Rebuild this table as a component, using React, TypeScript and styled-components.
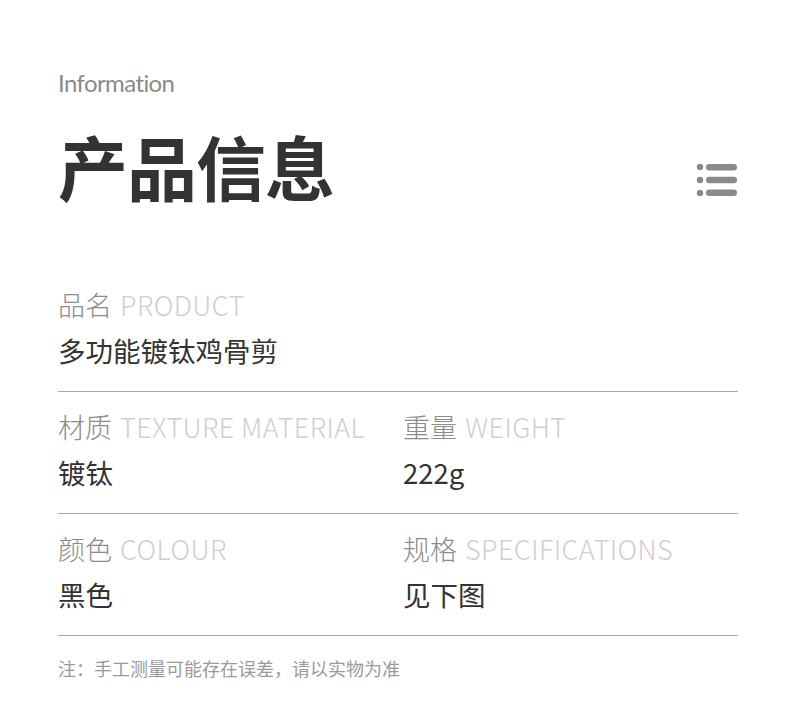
import React from 'react';
import styled, { createGlobalStyle } from 'styled-components';

const GlobalStyle = createGlobalStyle`
  html, body {
    margin: 0;
    padding: 0;
    background: #ffffff;
  }
  body {
    font-family: "Noto Sans CJK SC", "Noto Sans", sans-serif;
  }
`;

const Page = styled.div`
  width: 790px;
  height: 723px;
  box-sizing: border-box;
  padding: 66px 52px 0 58px;
  background: #fff;
`;

const Eyebrow = styled.div`
  font-family: "Lato", "Noto Sans", sans-serif;
  font-size: 24px;
  font-weight: 400;
  color: #8a8a8a;
  letter-spacing: -0.6px;
  line-height: 34px;
`;

const TitleBar = styled.div`
  display: flex;
  align-items: center;
  justify-content: space-between;
  margin-top: 16px;
  height: 100px;
`;

const Title = styled.h1`
  margin: 0;
  font-family: "Noto Sans CJK SC", sans-serif;
  font-size: 70px;
  font-weight: 700;
  color: #333;
  line-height: 100px;
  letter-spacing: -1px;
`;

const MenuIcon = styled.svg`
  width: 42px;
  height: 34px;
  margin-top: 28px;
`;

const Section = styled.div`
  margin-top: 70px;
`;

const Row = styled.div<{ $cols: number; $first?: boolean }>`
  display: grid;
  grid-template-columns: ${p => (p.$cols === 2 ? '345px 1fr' : '1fr')};
  row-gap: 7px;
  border-bottom: 1px solid #a8a8a8;
  padding: ${p => (p.$first ? '0 0 22px' : '16px 0 22px')};
`;

const Field = styled.div`
  display: flex;
  flex-direction: column;
  gap: 7px;
`;

const Label = styled.div`
  font-size: 27px;
  font-weight: 300;
  line-height: 38px;
  color: #8c8c8c;
`;

const LabelEn = styled.span`
  color: #cfcfcf;
  margin-left: 8px;
  letter-spacing: 0.4px;
`;

const Value = styled.div`
  font-size: 27.5px;
  font-weight: 400;
  line-height: 38px;
  color: #333;
`;

const Note = styled.div`
  margin-top: 20px;
  font-size: 18px;
  color: #9a9a9a;
  line-height: 24px;
`;

type Item = { cn: string; en: string; value: string };

const rows: Item[][] = [
  [{ cn: '品名', en: 'PRODUCT', value: '多功能镀钛鸡骨剪' }],
  [
    { cn: '材质', en: 'TEXTURE MATERIAL', value: '镀钛' },
    { cn: '重量', en: 'WEIGHT', value: '222g' },
  ],
  [
    { cn: '颜色', en: 'COLOUR', value: '黑色' },
    { cn: '规格', en: 'SPECIFICATIONS', value: '见下图' },
  ],
];

const App: React.FC = () => {
  return (
    <>
      <GlobalStyle />
      <Page>
        <Eyebrow>Information</Eyebrow>
        <TitleBar>
          <Title>产品信息</Title>
          <MenuIcon viewBox="0 0 42 34">
            <g fill="#8a8a8a">
              <circle cx="4" cy="4" r="3.2" />
              <circle cx="4" cy="17" r="3.2" />
              <circle cx="4" cy="30" r="3.2" />
              <rect x="10" y="1" width="31" height="6.4" rx="3.2" />
              <rect x="10" y="13.8" width="31" height="6.4" rx="3.2" />
              <rect x="10" y="26.6" width="31" height="6.4" rx="3.2" />
            </g>
          </MenuIcon>
        </TitleBar>
        <Section>
          {rows.map((row, i) => (
            <Row key={i} $cols={row.length} $first={i === 0}>
              {row.map(item => (
                <Field key={item.cn}>
                  <Label>
                    {item.cn}
                    <LabelEn>{item.en}</LabelEn>
                  </Label>
                  <Value>{item.value}</Value>
                </Field>
              ))}
            </Row>
          ))}
        </Section>
        <Note>注：手工测量可能存在误差，请以实物为准</Note>
      </Page>
    </>
  );
};

export default App;
